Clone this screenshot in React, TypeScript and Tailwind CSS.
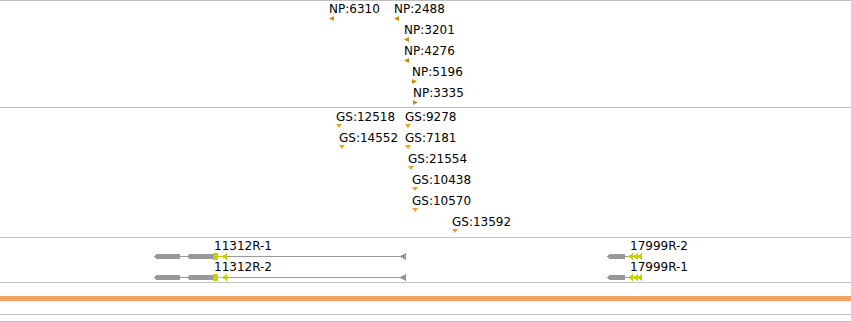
import React from "react";

type Dir = "left" | "right" | "down";

type Feature = { label: string; x: number; y: number; dir: Dir };

const npFeatures: Feature[] = [
  { label: "NP:6310", x: 329, y: 1, dir: "left" },
  { label: "NP:2488", x: 394, y: 1, dir: "left" },
  { label: "NP:3201", x: 404, y: 22, dir: "left" },
  { label: "NP:4276", x: 404, y: 43, dir: "left" },
  { label: "NP:5196", x: 412, y: 64, dir: "right" },
  { label: "NP:3335", x: 413, y: 85, dir: "right" },
];

const gsFeatures: Feature[] = [
  { label: "GS:12518", x: 336, y: 2, dir: "down" },
  { label: "GS:9278", x: 405, y: 2, dir: "down" },
  { label: "GS:14552", x: 339, y: 23, dir: "down" },
  { label: "GS:7181", x: 405, y: 23, dir: "down" },
  { label: "GS:21554", x: 408, y: 44, dir: "down" },
  { label: "GS:10438", x: 412, y: 65, dir: "down" },
  { label: "GS:10570", x: 412, y: 86, dir: "down" },
  { label: "GS:13592", x: 452, y: 107, dir: "down" },
];

const Marker: React.FC<{ dir: Dir }> = ({ dir }) => {
  if (dir === "down") {
    return (
      <svg width="6" height="4" className="block">
        <polygon points="0,0 6,0 3,4" fill="#e8a422" />
      </svg>
    );
  }
  return (
    <svg width="5" height="6" className="block">
      {dir === "left" ? (
        <polygon points="0,2.5 5,0 5,5" fill="#c98f0c" />
      ) : (
        <polygon points="0,0 5,2.5 0,5" fill="#c98f0c" />
      )}
    </svg>
  );
};

const FeatureLabel: React.FC<{ f: Feature }> = ({ f }) => (
  <div className="absolute flex flex-col" style={{ left: f.x, top: f.y }}>
    <span className="text-[12px] leading-[14px] text-black whitespace-nowrap">
      {f.label}
    </span>
    <Marker dir={f.dir} />
  </div>
);

const GRAY = "#999999";
const LIME = "#c4d300";

const GeneRow: React.FC<{ top: number }> = ({ top }) => (
  <svg
    width="851"
    height="9"
    className="absolute left-0"
    style={{ top }}
    shapeRendering="crispEdges"
  >
    {/* 11312R */}
    <rect x="154" y="4" width="246" height="1" fill={GRAY} />
    <polygon points="154,4.5 157,2 180,2 180,7 157,7" fill={GRAY} />
    <polygon points="187,4.5 190,2 213,2 213,7 190,7" fill={GRAY} />
    <rect x="213" y="1" width="5" height="7" fill={LIME} />
    <rect x="218" y="4" width="5" height="1" fill={LIME} />
    <polygon points="222,4.5 227,1 227,8" fill={LIME} />
    <polygon points="399,4.5 406,1 406,8" fill={GRAY} />
    {/* 17999R */}
    <polygon points="607,4.5 610,2 625,2 625,7 610,7" fill={GRAY} />
    <rect x="625" y="4" width="4" height="1" fill={GRAY} />
    <polygon points="628,4.5 633,1 633,8" fill={LIME} />
    <polygon points="633,4.5 638,1 638,8" fill={LIME} />
    <polygon points="637,4.5 642,1 642,8" fill={LIME} />
  </svg>
);

const Line = () => <div className="h-px bg-[#c0c0c0]" />;

export default function App() {
  return (
    <div className="w-[851px] h-[322px] bg-white overflow-hidden font-['DejaVu_Sans',sans-serif]">
      <Line />
      <div className="relative h-[106px]">
        {npFeatures.map((f) => (
          <FeatureLabel key={f.label} f={f} />
        ))}
      </div>
      <Line />
      <div className="relative h-[129px]">
        {gsFeatures.map((f) => (
          <FeatureLabel key={f.label} f={f} />
        ))}
      </div>
      <Line />
      <div className="relative h-[44px]">
        <span className="absolute left-[214px] top-[1px] text-[12px] leading-[14px] text-black">
          11312R-1
        </span>
        <span className="absolute left-[630px] top-[1px] text-[12px] leading-[14px] text-black">
          17999R-2
        </span>
        <GeneRow top={14} />
        <span className="absolute left-[214px] top-[22px] text-[12px] leading-[14px] text-black">
          11312R-2
        </span>
        <span className="absolute left-[630px] top-[22px] text-[12px] leading-[14px] text-black">
          17999R-1
        </span>
        <GeneRow top={35} />
      </div>
      <Line />
      <div className="h-[13px]" />
      <div className="h-[5px] bg-[#f4a36e]" />
      <div className="h-[13px]" />
      <Line />
      <div className="h-[6px]" />
      <Line />
    </div>
  );
}
